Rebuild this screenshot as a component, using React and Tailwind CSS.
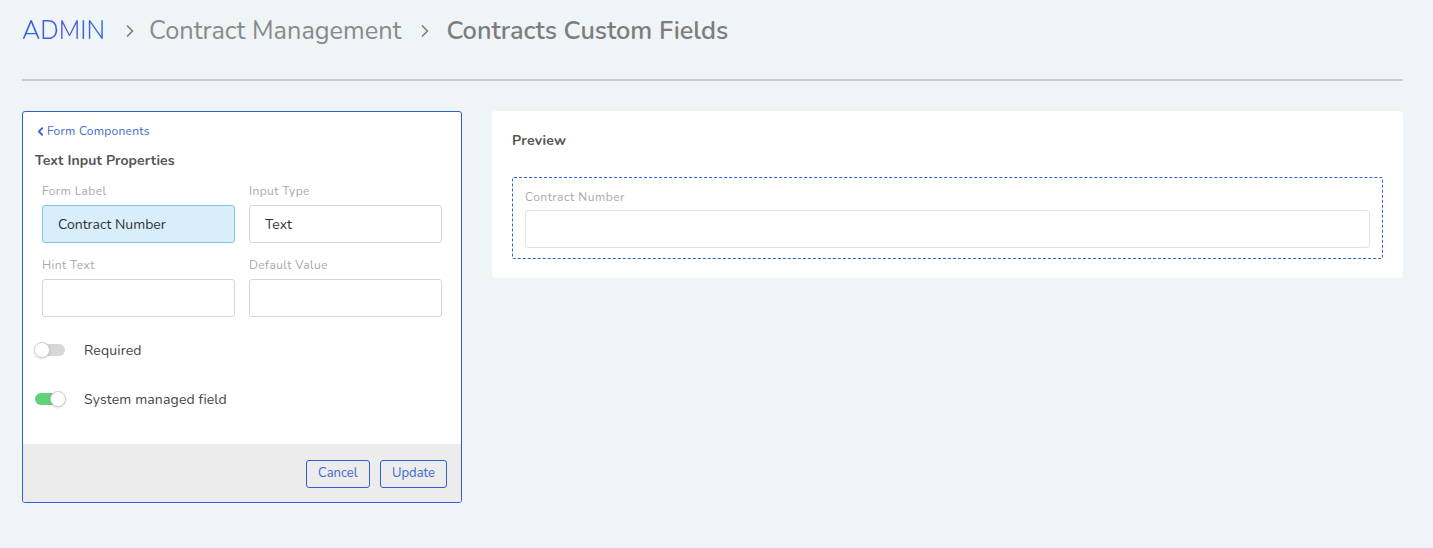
import React from "react";
import { ChevronRight, ChevronLeft } from "lucide-react";

function Field({ label, value, active }) {
  return (
    <div className="flex flex-col">
      <label className="text-[12px] tracking-[0.4px] text-[#a9a9a9] leading-none mb-[8px]">{label}</label>
      <div
        className={
          "h-[38px] rounded-[3px] border flex items-center px-[15px] text-[14px] text-[#333] " +
          (active ? "bg-[#d8effb] border-[#8cc3e3]" : "bg-white border-[#d6d6d6]")
        }
      >
        {value}
      </div>
    </div>
  );
}

function Toggle({ on, label }) {
  return (
    <div className="flex items-center h-[20px]">
      <div className="relative w-[30px] h-[12px]">
        <div className={"absolute inset-0 rounded-full " + (on ? "bg-[#62d27a]" : "bg-[#d7d7d7]")} />
        <div
          className={
            "absolute top-[-2px] w-[16px] h-[16px] rounded-full bg-white border border-[#d0d0d0] shadow-sm " +
            (on ? "left-[15px]" : "left-[-1px]")
          }
        />
      </div>
      <span className="ml-[19px] text-[14px] tracking-[0.15px] text-[#444]">{label}</span>
    </div>
  );
}

export default function App() {
  return (
    <div
      className="min-h-[548px] bg-[#eff4f7] pl-[22px] pr-[30px]"
      style={{ fontFamily: "'Nunito', 'Noto Sans', 'Open Sans', sans-serif" }}
    >
      <div className="h-[81px] flex items-start pt-[13px] border-b-2 border-[#c9ced1]">
        <div className="flex items-center text-[25.3px] leading-[36px]">
          <span className="font-light bg-gradient-to-r from-[#2c5fdc] via-[#4f58dc] to-[#2c6adc] bg-clip-text text-transparent">ADMIN</span>
          <ChevronRight size={20} strokeWidth={2} className="text-[#7d7d7d] ml-[15px] mr-[9px]" />
          <span className="text-[#8a8a8a]">Contract Management</span>
          <ChevronRight size={20} strokeWidth={2} className="text-[#7d7d7d] ml-[14px] mr-[11px]" />
          <span className="text-[#7d7d7d] font-semibold">Contracts Custom Fields</span>
        </div>
      </div>

      <div className="flex gap-[30px] mt-[30px] items-start">
        <div className="w-[440px] h-[392px] bg-white border border-[#2f5fd6] rounded-[3px] flex flex-col overflow-hidden">
          <div className="flex-1 px-[12px] pt-[12px]">
            <div className="flex items-center text-[12px] tracking-[0.25px] text-[#3d69d0] leading-[14px]">
              <ChevronLeft size={13} strokeWidth={3.5} className="-ml-[1px]" />
              <span>Form Components</span>
            </div>
            <div className="mt-[12px] text-[14px] tracking-[0.1px] font-bold text-[#555]">Text Input Properties</div>
            <div className="px-[7px] mt-[14px] grid grid-cols-2 gap-x-[14px] gap-y-[16px]">
              <Field label="Form Label" value="Contract Number" active />
              <Field label="Input Type" value="Text" />
              <Field label="Hint Text" value="" />
              <Field label="Default Value" value="" />
            </div>
            <div className="mt-[23px] flex flex-col gap-[29px]">
              <Toggle label="Required" />
              <Toggle on label="System managed field" />
            </div>
          </div>
          <div className="h-[58px] bg-[#ececec] flex items-center justify-end gap-[10px] pr-[14px] pt-[2px]">
            <button className="h-[28px] px-[11.5px] rounded-[3px] border border-[#2f5fd6] text-[13px] text-[#3d69d0]">Cancel</button>
            <button className="h-[28px] px-[11px] rounded-[3px] border border-[#2f5fd6] text-[13px] text-[#3d69d0]">Update</button>
          </div>
        </div>

        <div className="flex-1 h-[167px] bg-white rounded-[4px] px-[20px] pt-[19px]">
          <div className="text-[14px] tracking-[0.3px] font-bold text-[#555]">Preview</div>
          <div className="mt-[26px] border border-dashed border-[#2f63dd] rounded-[2px] px-[12px] pt-[13px] pb-[10px]">
            <div className="text-[12px] tracking-[0.5px] text-[#a9a9a9] leading-none mb-[7px]">Contract Number</div>
            <div className="h-[38px] rounded-[3px] border border-[#e3e3e3] bg-white" />
          </div>
        </div>
      </div>
    </div>
  );
}
